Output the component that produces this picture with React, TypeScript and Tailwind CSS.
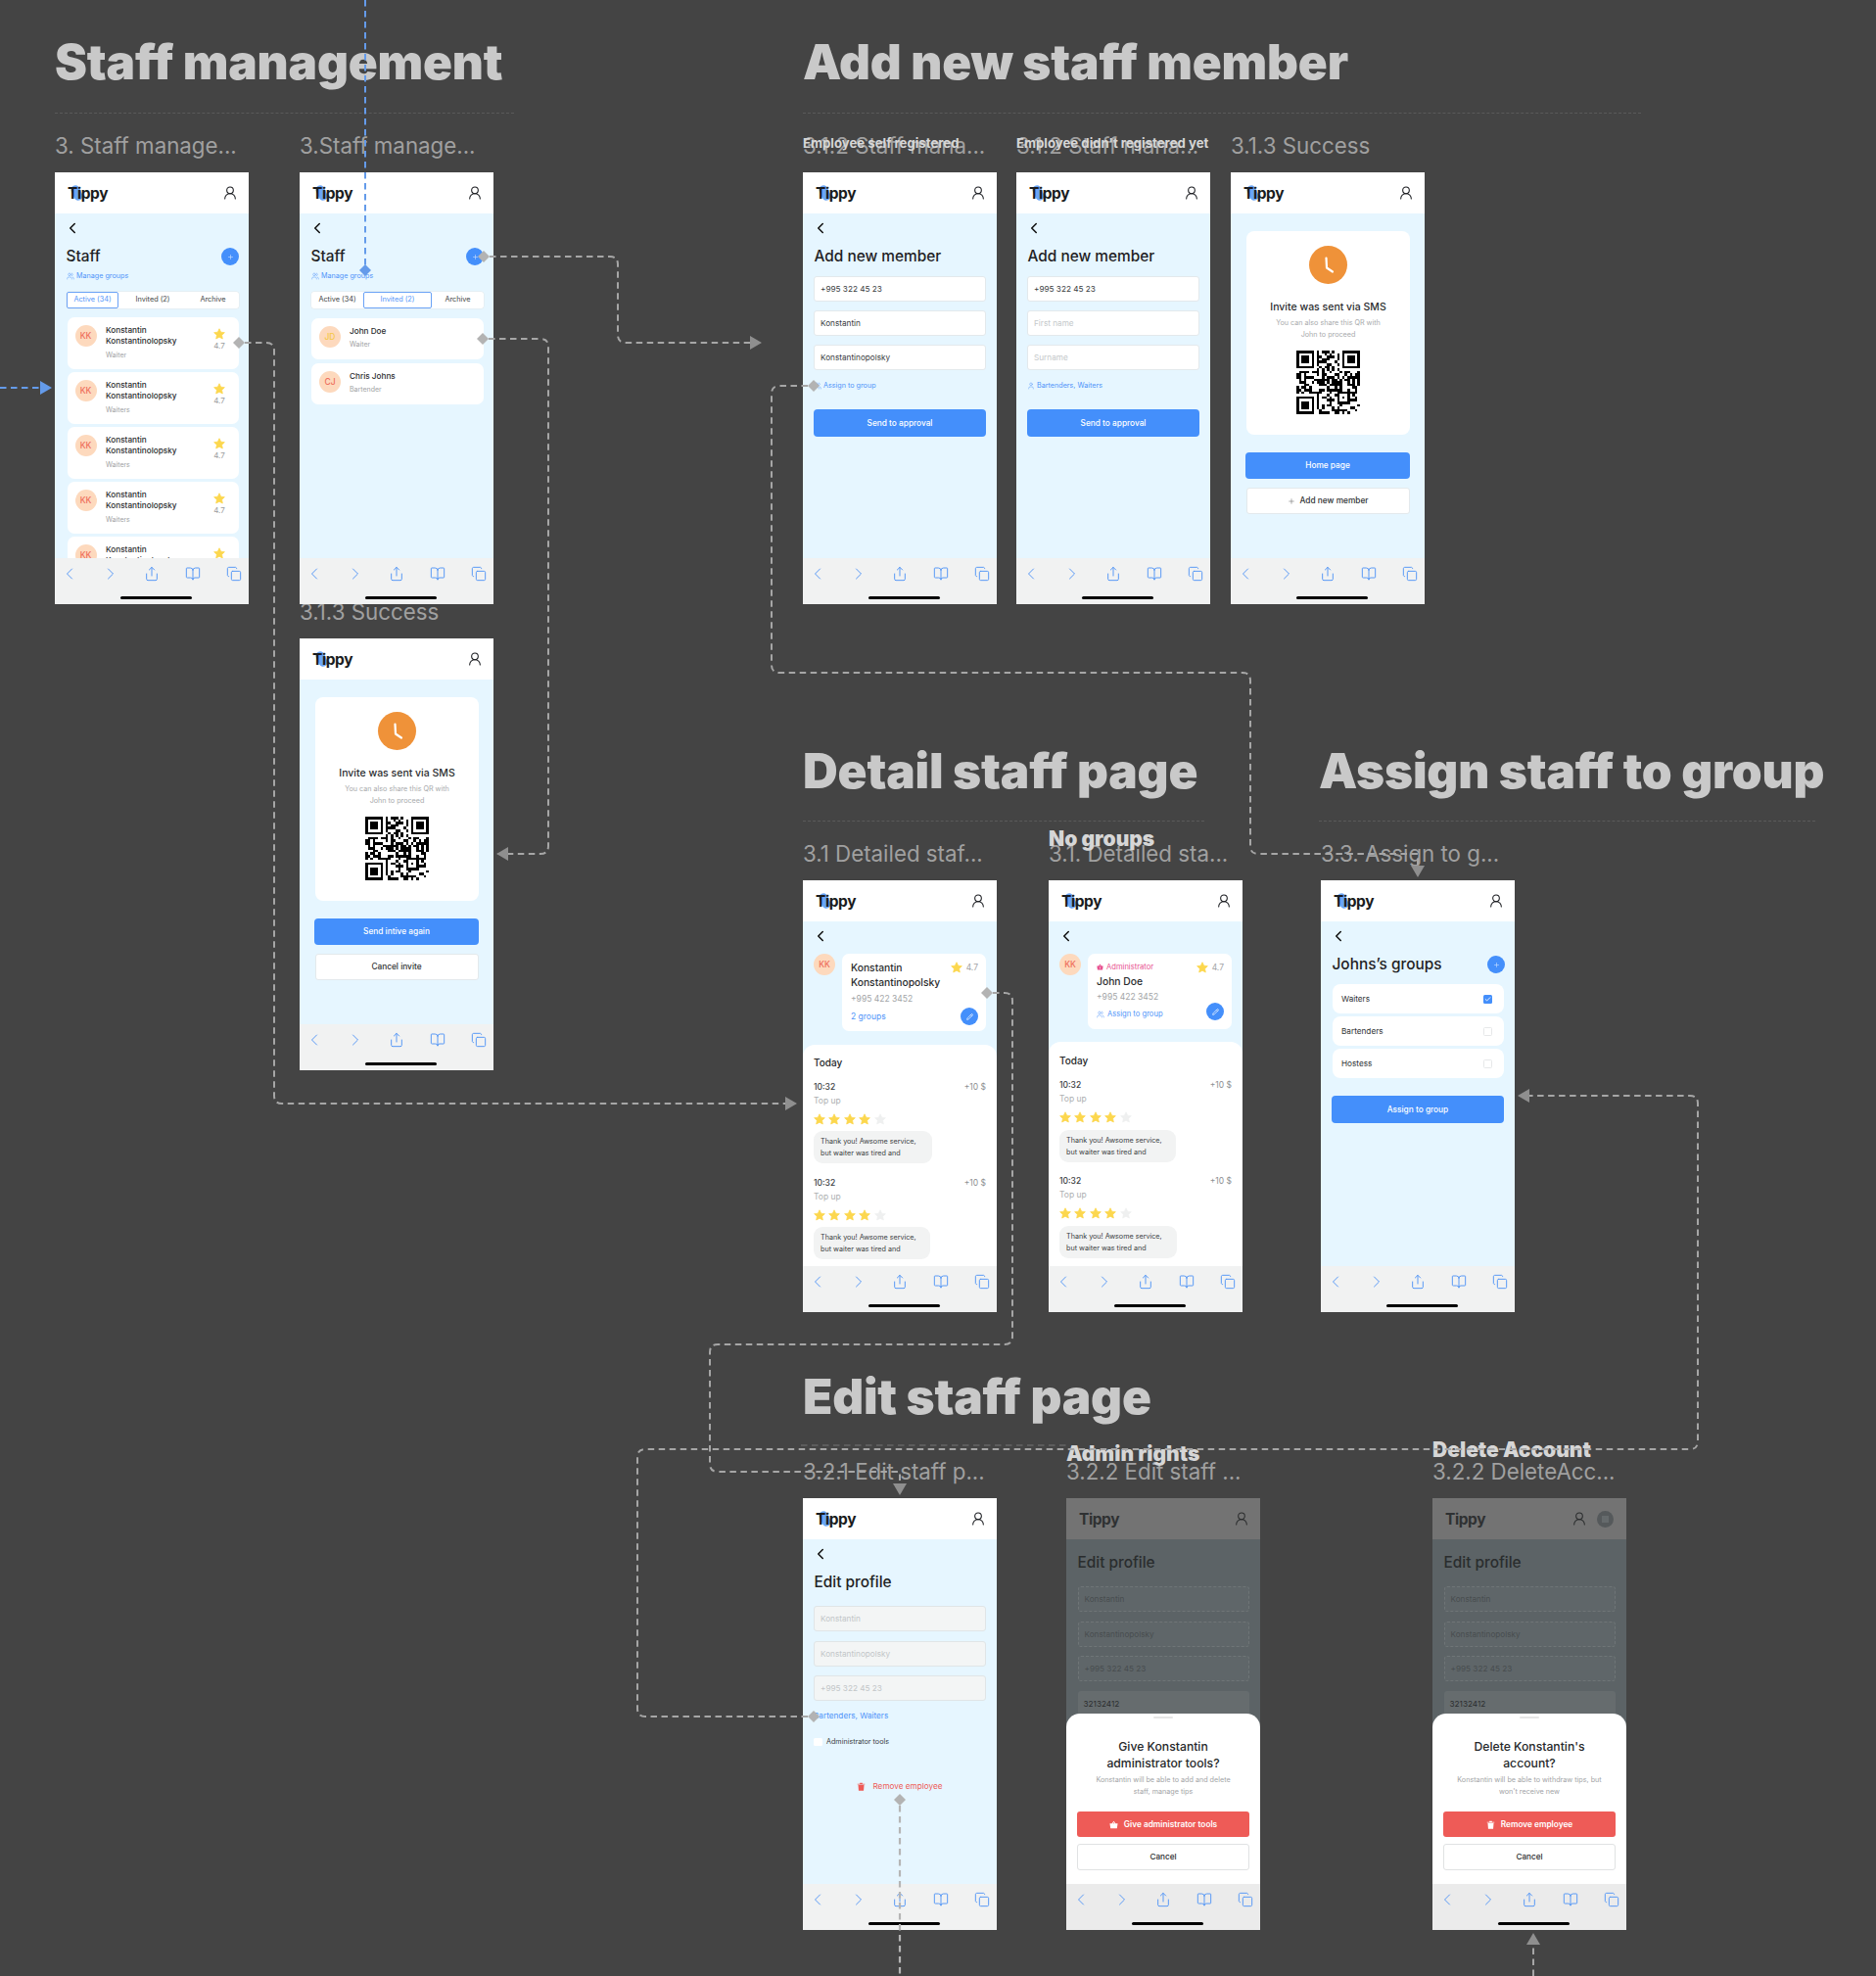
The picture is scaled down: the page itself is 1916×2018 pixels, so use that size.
import React from "react";
import { ChevronLeft, ChevronRight, UserRound, Users, User, Plus, Check, Pencil, Share, BookOpen, Copy } from "lucide-react";

function qrMatrix(seed: number) {
  const n = 25;
  let s = seed;
  const m: boolean[][] = [];
  for (let y = 0; y < n; y++) {
    const row: boolean[] = [];
    for (let x = 0; x < n; x++) {
      s = (s * 1103515245 + 12345) & 0x7fffffff;
      row.push(((s >> 16) & 3) < 2);
    }
    m.push(row);
  }
  const finder = (ox: number, oy: number) => {
    for (let y = -1; y < 8; y++)
      for (let x = -1; x < 8; x++) {
        const px = ox + x;
        const py = oy + y;
        if (px < 0 || py < 0 || px >= n || py >= n) continue;
        const on = x >= 0 && x <= 6 && y >= 0 && y <= 6 && (x === 0 || x === 6 || y === 0 || y === 6 || (x >= 2 && x <= 4 && y >= 2 && y <= 4));
        m[py][px] = on;
      }
  };
  finder(0, 0);
  finder(18, 0);
  finder(0, 18);
  for (let y = 16; y < 21; y++)
    for (let x = 16; x < 21; x++) m[y][x] = x === 16 || x === 20 || y === 16 || y === 20 || (x === 18 && y === 18);
  return m;
}
const QR_CELLS = qrMatrix(7321);

function QR() {
  return (
    <svg width="65" height="65" viewBox="0 0 25 25" shapeRendering="crispEdges" className="mx-auto block mt-[10px]">
      {QR_CELLS.map((row, y) => row.map((on, x) => (on ? <rect key={x + "-" + y} x={x} y={y} width="1" height="1" fill="#000" /> : null)))}
    </svg>
  );
}

function StarIcon({ size = 12, color = "#fcd74e" }: { size?: number; color?: string }) {
  return (
    <svg width={size} height={size} viewBox="0 0 24 24" className="shrink-0">
      <path d="M12 1.5l3.2 6.9 7.5.9-5.5 5.2 1.4 7.5L12 18.4 5.4 22l1.4-7.5L1.3 9.3l7.5-.9z" fill={color} stroke={color} strokeWidth="1.5" strokeLinejoin="round" />
    </svg>
  );
}

function TrashIcon({ color, size = 9 }: { color: string; size?: number }) {
  return (
    <svg width={size} height={size} viewBox="0 0 12 12" className="shrink-0">
      <path d="M1 2.2h10v1.2H1zM4.2 1h3.6v1.2H4.2zM2 4h8l-.6 7.6H2.6z" fill={color} />
    </svg>
  );
}

function CrownIcon({ color, size = 9 }: { color: string; size?: number }) {
  return (
    <svg width={size} height={size} viewBox="0 0 12 12" className="shrink-0">
      <path d="M6 1L8.6 4.4H11.4L10.4 11H1.6L0.6 4.4H3.4zM4.8 4.4H7.2L6 2.8z" fill={color} fillRule="evenodd" />
      <circle cx="6" cy="7.6" r="1.2" fill="#fff" opacity="0.7" />
    </svg>
  );
}

function Logo({ dim = false }: { dim?: boolean }) {
  return (
    <div className="relative ml-[13px] w-[42px] h-[20px] flex items-center">
      {!dim && <div className="absolute left-[5px] top-[2px] w-[9px] h-[16px] rounded-full rotate-[-25deg] bg-[#6aa5f5]" />}
      <span className={"relative text-[15.5px] leading-[20px] font-bold tracking-[-0.4px] translate-y-[1px] " + (dim ? "text-[#2f3132]" : "text-[#1a1c20]")}>Tippy</span>
    </div>
  );
}

function Header({ dim = false, extra = false }: { dim?: boolean; extra?: boolean }) {
  return (
    <div className={"h-[42px] shrink-0 flex items-center justify-between " + (dim ? "bg-[#737373]" : "bg-white")}>
      <Logo dim={dim} />
      <div className="flex items-center">
        <UserRound size={16} strokeWidth={1.6} color={dim ? "#2a2c2d" : "#1a1c20"} className={extra ? "mr-[10px]" : "mr-[11px]"} />
        {extra && (
          <div className="w-[17px] h-[17px] rounded-full bg-[#55595b] mr-[13px] flex items-center justify-center">
            <div className="w-[7px] h-[7px] bg-[#656a6c]" />
          </div>
        )}
      </div>
    </div>
  );
}

function Toolbar({ dim = false }: { dim?: boolean }) {
  const c = "#5a9af6";
  return (
    <div className={"h-[47px] shrink-0 relative z-10 " + (dim ? "bg-[#ebebeb]" : "bg-[#f1f2f2]")}>
      <div className="flex items-center justify-between px-[7px] pt-[8px] h-[24px]">
        <span className="w-[16px] flex justify-center">
          <ChevronLeft size={20} strokeWidth={1.2} color={c} className="shrink-0" />
        </span>
        <span className="w-[16px] flex justify-center">
          <ChevronRight size={20} strokeWidth={1.2} color={c} className="shrink-0" />
        </span>
        <Share size={16} strokeWidth={1.5} color={c} />
        <BookOpen size={16} strokeWidth={1.5} color={c} />
        <Copy size={16} strokeWidth={1.5} color={c} />
      </div>
      <div className="ml-[67px] mt-[15px] w-[73px] h-[3px] rounded-full bg-black" />
    </div>
  );
}

function Phone({ pos, children, dim = false, extra = false }: { pos: string; children: React.ReactNode; dim?: boolean; extra?: boolean }) {
  return (
    <div className={"absolute w-[198px] h-[441px] flex flex-col overflow-hidden " + pos + (dim ? " bg-[#5c6366]" : " bg-[#e6f6ff]")}>
      <Header dim={dim} extra={extra} />
      <div className="flex-1 min-h-0 overflow-hidden relative flex flex-col">{children}</div>
      <Toolbar dim={dim} />
    </div>
  );
}

function Back() {
  return (
    <div className="h-[12px] mt-[9px] ml-[9px] shrink-0 flex items-center">
      <ChevronLeft size={18} strokeWidth={2.1} color="#111" className="shrink-0" />
    </div>
  );
}

function TitleRow({ title, plus = false, mt = "mt-[13px]" }: { title: string; plus?: boolean; mt?: string }) {
  return (
    <div className={"flex items-center justify-between h-[20px] pl-[11.5px] pr-[10px] shrink-0 " + mt}>
      <span className="text-[15.4px] leading-[20px] font-medium text-[#1f2224] whitespace-nowrap">{title}</span>
      {plus && <PlusBtn />}
    </div>
  );
}

function PlusBtn() {
  return (
    <span className="w-[18px] h-[18px] rounded-full bg-[#448ffb] flex items-center justify-center">
      <Plus size={7} strokeWidth={2} color="#cfe2ff" />
    </span>
  );
}

function Tabs({ active }: { active: number }) {
  const items = [
    { t: "Active (34)", w: "w-[53px]" },
    { t: "Invited (2)", w: "w-[70px]" },
    { t: "Archive", w: "w-[53px]" },
  ];
  return (
    <div className="mt-[11px] ml-[12px] w-[176px] h-[17px] flex bg-white rounded-[3px] shrink-0 shadow-[0_0_0_0.5px_#e3e8ea]">
      {items.map((it, i) => (
        <div
          key={it.t}
          className={
            "h-full flex items-center justify-center text-[7.3px] " +
            it.w +
            (i === active ? " border border-[#6ba3f6] rounded-[2px] text-[#4f94f9]" : " text-[#3c3f41]")
          }
        >
          {it.t}
        </div>
      ))}
    </div>
  );
}

function Manage() {
  return (
    <div className="mt-[5px] ml-[12px] h-[10px] flex items-center gap-[2px] text-[7.2px] leading-[10px] text-[#4f94f9] shrink-0">
      <Users size={8} strokeWidth={1.4} />
      <span>Manage groups</span>
    </div>
  );
}

function StaffCard({ role }: { role: string }) {
  return (
    <div className="h-[53px] shrink-0 ml-[12.5px] w-[175.5px] bg-white rounded-[7px] flex pt-[8px] pl-[8px] pr-[8px]">
      <div className="w-[22px] h-[22px] rounded-full bg-[#fdd9bd] flex items-center justify-center text-[8.5px] font-medium text-[#ee6e5b] shrink-0">KK</div>
      <div className="ml-[9.5px] flex-1 min-w-0">
        <div className="text-[8.2px] leading-[11px] font-medium text-[#2a2c2e]">Konstantin</div>
        <div className="text-[8.2px] leading-[11px] font-medium text-[#2a2c2e] whitespace-nowrap">Konstantinolopsky</div>
        <div className="mt-[4px] text-[7px] leading-[10px] text-[#a0a2a3]">{role}</div>
      </div>
      <div className="w-[24px] flex flex-col items-center pt-[3px] shrink-0">
        <StarIcon size={12} />
        <div className="mt-[1px] text-[8px] leading-[10px] text-[#9a9c9e]">4.7</div>
      </div>
    </div>
  );
}

function InviteCard({ initials, color, name, role, mt }: { initials: string; color: string; name: string; role: string; mt: string }) {
  return (
    <div className={"h-[42px] shrink-0 ml-[11.5px] w-[176px] bg-white rounded-[7px] flex items-start pt-[8px] pl-[8.5px] " + mt}>
      <div className={"w-[22px] h-[22px] rounded-full bg-[#fdd9bd] flex items-center justify-center text-[8.5px] font-medium shrink-0 " + color}>{initials}</div>
      <div className="ml-[9px]">
        <div className="text-[8.2px] leading-[11px] font-medium text-[#2a2c2e]">{name}</div>
        <div className="mt-[3px] text-[7px] leading-[10px] text-[#a0a2a3]">{role}</div>
      </div>
    </div>
  );
}

function Input({ text, mt, muted = false }: { text: string; mt: string; muted?: boolean }) {
  return (
    <div className={"ml-[11px] w-[176px] h-[26px] shrink-0 bg-white rounded-[3px] border border-[#e3e9ec] flex items-center pl-[6px] text-[8.2px] " + mt + (muted ? " text-[#c4c8ca]" : " text-[#3a3d3f]")}>
      {text}
    </div>
  );
}

function EditInput({ text, mt }: { text: string; mt: string }) {
  return (
    <div className={"ml-[11px] w-[176px] h-[26px] shrink-0 bg-[#f3f5f5] rounded-[3px] border border-[#e0e5e7] flex items-center pl-[6px] text-[8.2px] text-[#c2c6c8] " + mt}>
      {text}
    </div>
  );
}

function DimInput({ text, mt }: { text: string; mt: string }) {
  return (
    <div className={"ml-[11.5px] w-[175px] h-[26px] shrink-0 rounded-[3px] border border-dashed border-[#6f7577] bg-[#5f6669] flex items-center pl-[6px] text-[8.2px] text-[#484d4f] " + mt}>
      {text}
    </div>
  );
}

function PrimaryBtn({ text, cls }: { text: string; cls: string }) {
  return <div className={"shrink-0 rounded-[4px] bg-[#448ffb] flex items-center justify-center text-[8.3px] font-medium text-white " + cls}>{text}</div>;
}

function SuccessCard() {
  return (
    <div className="mt-[18px] ml-[16px] w-[167px] h-[208px] shrink-0 bg-white rounded-[8px] flex flex-col items-center pt-[14.5px]">
      <div className="w-[39px] h-[39px] rounded-full bg-[#ef9239] flex items-center justify-center">
        <svg width="16" height="20" viewBox="0 0 16 20" fill="none">
          <path d="M5.5 3.5L6 13.5L12 17.5" stroke="#fff" strokeWidth="2.2" strokeLinecap="round" strokeLinejoin="round" />
        </svg>
      </div>
      <div className="mt-[17.5px] text-[10.5px] leading-[14px] font-medium text-[#2a2c2e] whitespace-nowrap">Invite was sent via SMS</div>
      <div className="mt-[3px] text-[7.2px] leading-[12px] text-[#a8aaac] text-center">
        You can also share this QR with
        <br />
        John to proceed
      </div>
      <QR />
    </div>
  );
}

function RatingStars() {
  return (
    <div className="flex gap-[3.4px] mt-[7px] h-[12px]">
      <StarIcon />
      <StarIcon />
      <StarIcon />
      <StarIcon />
      <StarIcon color="#eff0f0" />
    </div>
  );
}

function Entry({ mt, bubble, bubbleMt = "mt-[6px]" }: { mt: string; bubble: string; bubbleMt?: string }) {
  return (
    <div className={mt}>
      <div className="flex justify-between text-[8.5px] leading-[12px]">
        <span className="font-medium text-[#3a3d3f]">10:32</span>
        <span className="text-[#8e9092]">+10 $</span>
      </div>
      <div className="mt-[2px] text-[8.5px] leading-[12px] text-[#adafb1]">Top up</div>
      <RatingStars />
      <div className={"h-[33px] rounded-[9px] bg-[#f2f3f3] pt-[5px] pl-[7px] text-[7.2px] leading-[12px] text-[#3a3d3f] whitespace-nowrap " + bubble + " " + bubbleMt}>
        Thank you! Awsome service,
        <br />
        but waiter was tired and
      </div>
    </div>
  );
}

function EditCircle() {
  return (
    <span className="w-[18px] h-[18px] rounded-full bg-[#448ffb] flex items-center justify-center shrink-0">
      <Pencil size={7} strokeWidth={2.4} color="#fff" />
    </span>
  );
}

function Rating47() {
  return (
    <div className="flex items-center gap-[4px] h-[15px] shrink-0">
      <StarIcon size={12} />
      <span className="text-[8.5px] text-[#a2a4a6]">4.7</span>
    </div>
  );
}

function Row({ text, checked, mt }: { text: string; checked?: boolean; mt: string }) {
  return (
    <div className={"ml-[12px] w-[175px] h-[30px] shrink-0 bg-white rounded-[8px] flex items-center justify-between pl-[9px] pr-[12.5px] text-[8.2px] text-[#2f3234] " + mt}>
      <span>{text}</span>
      {checked ? (
        <span className="w-[9px] h-[9px] rounded-[1.5px] bg-[#448ffb] flex items-center justify-center">
          <Check size={7} strokeWidth={3} color="#fff" />
        </span>
      ) : (
        <span className="w-[9px] h-[9px] rounded-[1.5px] border border-[#e6e8e9] bg-white" />
      )}
    </div>
  );
}

function Sheet({ title1, title2, sub1, sub2, btn, icon }: { title1: string; title2: string; sub1: string; sub2: string; btn: string; icon: React.ReactNode }) {
  return (
    <div className="absolute left-0 right-0 top-[178px] bottom-0 bg-white rounded-t-[14px] flex flex-col items-center">
      <div className="mt-[2.5px] w-[20px] h-[2px] rounded-full bg-[#e6e6e6]" />
      <div className="mt-[20px] text-[12.2px] leading-[17px] font-medium text-[#26282a] text-center whitespace-nowrap">
        {title1}
        <br />
        {title2}
      </div>
      <div className="mt-[3px] text-[7.2px] leading-[12.5px] text-[#a2a4a6] text-center whitespace-nowrap">
        {sub1}
        <br />
        {sub2}
      </div>
      <div className="mt-[13.5px] w-[176px] h-[26px] rounded-[3px] bg-[#ee5b57] flex items-center justify-center gap-[6px] text-[8.3px] font-semibold text-white">
        {icon}
        <span>{btn}</span>
      </div>
      <div className="mt-[7px] w-[176px] h-[27px] rounded-[3px] border border-[#e0e2e3] bg-white flex items-center justify-center text-[8.2px] font-medium text-[#2a2c2e]">Cancel</div>
    </div>
  );
}

function DimEditBody() {
  return (
    <>
      <div className="mt-[14px] h-[20px] pl-[11.5px] text-[15.4px] leading-[20px] font-medium text-[#2a2d2e] shrink-0">Edit profile</div>
      <DimInput text="Konstantin" mt="mt-[14px]" />
      <DimInput text="Konstantinopolsky" mt="mt-[10px]" />
      <DimInput text="+995 322 45 23" mt="mt-[9px]" />
      <div className="mt-[10px] ml-[11.5px] w-[175px] h-[26px] shrink-0 rounded-[3px] bg-[#666c6e] flex items-center pl-[6px] text-[8.2px] text-[#2c2e2f]">32132412</div>
    </>
  );
}

function H({ pos, children }: { pos: string; children: React.ReactNode }) {
  return <h1 className={"absolute text-[49.5px] leading-[46px] font-black tracking-[-0.2px] text-[#c9c9c9] whitespace-nowrap " + pos}>{children}</h1>;
}
function L({ pos, children }: { pos: string; children: React.ReactNode }) {
  return <div className={"absolute text-[22.3px] leading-[28px] text-[#a0a0a0] whitespace-nowrap " + pos}>{children}</div>;
}
function B({ pos, children, cls }: { pos: string; children: React.ReactNode; cls: string }) {
  return <div className={"absolute text-[#d6d6d6] whitespace-nowrap " + cls + " " + pos}>{children}</div>;
}
function Rule({ pos }: { pos: string }) {
  return <div className={"absolute border-t border-dashed border-[#5a5a5a] " + pos} />;
}

function Diamond({ x, y, fill = "#b3b3b3", r = 6 }: { x: number; y: number; fill?: string; r?: number }) {
  return <polygon points={`${x},${y - r} ${x + r},${y} ${x},${y + r} ${x - r},${y}`} fill={fill} />;
}

function Connectors() {
  const g = { stroke: "#a6a6a6", strokeWidth: 2, strokeDasharray: "6.5 4.5", fill: "none" };
  const a = "#8f8f8f";
  const b = "#649bea";
  return (
    <svg width="1916" height="2018" viewBox="0 0 1916 2018" className="absolute left-0 top-0 z-20 pointer-events-none">
      <path d="M0 396H44" stroke={b} strokeWidth="2" strokeDasharray="6.5 4.5" fill="none" />
      <polygon points="41,389 53,396 41,403" fill={b} />
      <path d="M373 0V276" stroke={b} strokeWidth="2" strokeDasharray="6.5 4.5" fill="none" />
      <Diamond x={373} y={276} fill={b} />

      <path d="M250 350H272Q280 350 280 358V1119Q280 1127 288 1127H804" {...g} />
      <polygon points="814,1127 802,1120 802,1134" fill={a} />
      <Diamond x={244} y={350} />

      <path d="M500 262H623Q631 262 631 270V342Q631 350 639 350H768" {...g} />
      <polygon points="778,350 766,343 766,357" fill={a} />
      <Diamond x={494} y={262} />

      <path d="M499 346H552Q560 346 560 354V864Q560 872 552 872H516" {...g} />
      <polygon points="507,872 519,865 519,879" fill={a} />
      <Diamond x={493} y={346} />

      <path d="M825 394H796Q788 394 788 402V679Q788 687 796 687H1269Q1277 687 1277 695V864Q1277 872 1285 872H1448V888" {...g} />
      <polygon points="1448,896 1441,884 1455,884" fill={a} />
      <Diamond x={831} y={394} />

      <path d="M1014 1014H1026Q1034 1014 1034 1022V1365Q1034 1373 1026 1373H733Q725 1373 725 1381V1495Q725 1503 733 1503H919V1519" {...g} />
      <polygon points="919,1527 912,1515 926,1515" fill={a} />
      <Diamond x={1008} y={1014} />

      <path d="M825 1753H659Q651 1753 651 1745V1488Q651 1480 659 1480H1726Q1734 1480 1734 1472V1127Q1734 1119 1726 1119H1560" {...g} />
      <polygon points="1550,1119 1562,1112 1562,1126" fill={a} />
      <Diamond x={831} y={1753} />
      <path d="M818 1476H1090" stroke="#5c5c5c" strokeWidth="2" strokeDasharray="6.5 4.5" fill="none" />

      <path d="M919 1844V2018" stroke="#b5b5b5" strokeWidth="2.2" strokeDasharray="6.5 4.5" fill="none" />
      <Diamond x={919} y={1838} />

      <path d="M1566 2018V1984" {...g} />
      <polygon points="1566,1974 1559,1986 1573,1986" fill={a} />
    </svg>
  );
}

export default function App() {
  const staff = ["Waiter", "Waiters", "Waiters", "Waiters", "Waiters"];
  return (
    <div className="relative w-[1916px] h-[2018px] overflow-hidden bg-[#444444] [font-family:Inter,sans-serif]">
      <H pos="left-[56px] top-[40px]">Staff management</H>
      <H pos="left-[820px] top-[40px]">Add new staff member</H>
      <H pos="left-[820px] top-[764px]">Detail staff page</H>
      <H pos="left-[1347px] top-[764px]">Assign staff to group</H>
      <H pos="left-[820px] top-[1403px]">Edit staff page</H>

      <Rule pos="left-[56px] top-[115px] w-[469px]" />
      <Rule pos="left-[820px] top-[115px] w-[856px]" />
      <Rule pos="left-[820px] top-[838px] w-[410px]" />
      <Rule pos="left-[1347px] top-[838px] w-[507px]" />

      <L pos="left-[56px] top-[135px]">3. Staff manage...</L>
      <L pos="left-[306px] top-[135px]">3.Staff manage...</L>
      <L pos="left-[820px] top-[135px]">3.1.2 Staff mana...</L>
      <L pos="left-[1038px] top-[135px]">3.1.2 Staff mana...</L>
      <L pos="left-[1257px] top-[135px]">3.1.3 Success</L>
      <L pos="left-[306px] top-[611px]">3.1.3 Success</L>
      <L pos="left-[820px] top-[858px]">3.1 Detailed staf...</L>
      <L pos="left-[1071px] top-[858px]">3.1. Detailed sta...</L>
      <L pos="left-[1349px] top-[858px]">3.3. Assign to g...</L>
      <L pos="left-[820px] top-[1489px]">3.2.1 Edit staff p...</L>
      <L pos="left-[1089px] top-[1489px]">3.2.2 Edit staff ...</L>
      <L pos="left-[1463px] top-[1489px]">3.2.2 DeleteAcc...</L>

      <B pos="left-[820px] top-[137px]" cls="text-[13.2px] leading-[18px] font-bold">Employee self registered</B>
      <B pos="left-[1038px] top-[137px]" cls="text-[13.2px] leading-[18px] font-bold">Employee didn't registered yet</B>
      <B pos="left-[1071px] top-[844px]" cls="text-[21px] leading-[26px] font-black">No groups</B>
      <B pos="left-[1089px] top-[1472px]" cls="text-[21px] leading-[26px] font-black">Admin rights</B>
      <B pos="left-[1463px] top-[1468px]" cls="text-[21px] leading-[26px] font-black">Delete Account</B>

      {/* 3. Staff management */}
      <Phone pos="left-[56px] top-[176px]">
        <Back />
        <TitleRow title="Staff" plus />
        <Manage />
        <Tabs active={0} />
        <div className="mt-[9px] flex flex-col gap-[3px]">
          {staff.map((r, i) => (
            <StaffCard key={i} role={r} />
          ))}
        </div>
      </Phone>

      <Phone pos="left-[306px] top-[176px]">
        <Back />
        <TitleRow title="Staff" plus />
        <Manage />
        <Tabs active={1} />
        <InviteCard initials="JD" color="text-[#f5c84a]" name="John Doe" role="Waiter" mt="mt-[10px]" />
        <InviteCard initials="CJ" color="text-[#ee6e5b]" name="Chris Johns" role="Bartender" mt="mt-[4px]" />
      </Phone>

      <Phone pos="left-[306px] top-[652px]">
        <SuccessCard />
        <PrimaryBtn text="Send intive again" cls="mt-[18px] ml-[15px] w-[168px] h-[27px]" />
        <div className="mt-[9px] ml-[15.5px] w-[167px] h-[27px] shrink-0 bg-white rounded-[3px] border border-[#e3e9ec] flex items-center justify-center text-[8.3px] font-medium text-[#2f3234]">Cancel invite</div>
      </Phone>

      {/* Add new member */}
      <Phone pos="left-[820px] top-[176px]">
        <Back />
        <TitleRow title="Add new member" />
        <Input text="+995 322 45 23" mt="mt-[10px]" />
        <Input text="Konstantin" mt="mt-[9px]" />
        <Input text="Konstantinopolsky" mt="mt-[9px]" />
        <div className="mt-[11px] ml-[11px] h-[10px] flex items-center gap-[2px] text-[7.2px] leading-[10px] text-[#4f94f9]">
          <Users size={8} strokeWidth={1.4} />
          <span>Assign to group</span>
        </div>
        <PrimaryBtn text="Send to approval" cls="mt-[19px] ml-[11px] w-[176px] h-[28px]" />
      </Phone>

      <Phone pos="left-[1038px] top-[176px]">
        <Back />
        <TitleRow title="Add new member" />
        <Input text="+995 322 45 23" mt="mt-[10px]" />
        <Input text="First name" mt="mt-[9px]" muted />
        <Input text="Surname" mt="mt-[9px]" muted />
        <div className="mt-[11px] ml-[11px] h-[10px] flex items-center gap-[2px] text-[7.2px] leading-[10px] text-[#4f94f9]">
          <User size={8} strokeWidth={1.4} />
          <span>Bartenders, Waiters</span>
        </div>
        <PrimaryBtn text="Send to approval" cls="mt-[19px] ml-[11px] w-[176px] h-[28px]" />
      </Phone>

      <Phone pos="left-[1257px] top-[176px]">
        <SuccessCard />
        <PrimaryBtn text="Home page" cls="mt-[18px] ml-[15px] w-[168px] h-[27px]" />
        <div className="mt-[9px] ml-[15.5px] w-[167px] h-[27px] shrink-0 bg-white rounded-[3px] border border-[#e3e9ec] flex items-center justify-center gap-[5px] text-[8.3px] font-medium text-[#2f3234]">
          <Plus size={8} strokeWidth={1.4} color="#555" />
          <span>Add new member</span>
        </div>
      </Phone>

      {/* Detail */}
      <Phone pos="left-[820px] top-[899px]">
        <Back />
        <div className="mt-[12px] ml-[11px] flex items-start shrink-0">
          <div className="w-[22px] h-[22px] rounded-full bg-[#fdd9bd] flex items-center justify-center text-[8.5px] font-medium text-[#ee6e5b]">KK</div>
          <div className="ml-[7px] w-[147px] h-[79px] bg-white rounded-[7px] pl-[9px] pr-[8px] pt-[6.5px]">
            <div className="flex justify-between">
              <div className="text-[10.3px] leading-[15px] font-medium text-[#2a2c2e] whitespace-nowrap">
                Konstantin
                <br />
                Konstantinopolsky
              </div>
              <Rating47 />
            </div>
            <div className="mt-[3.5px] text-[8.5px] leading-[12px] text-[#a2a4a6]">+995 422 3452</div>
            <div className="mt-[3px] h-[18px] flex items-center justify-between">
              <span className="text-[8.5px] leading-[12px] text-[#4f94f9]">2 groups</span>
              <EditCircle />
            </div>
          </div>
        </div>
        <div className="mt-[14px] flex-1 bg-white rounded-t-[12px] px-[11px] pt-[11px] overflow-hidden">
          <div className="text-[10px] leading-[14px] font-medium text-[#26282a]">Today</div>
          <Entry mt="mt-[12px]" bubble="w-[121px]" />
          <Entry mt="mt-[14px]" bubble="w-[119px]" />
        </div>
      </Phone>

      <Phone pos="left-[1071px] top-[899px]">
        <Back />
        <div className="mt-[12px] ml-[11px] flex items-start shrink-0">
          <div className="w-[22px] h-[22px] rounded-full bg-[#fdd9bd] flex items-center justify-center text-[8.5px] font-medium text-[#ee6e5b]">KK</div>
          <div className="ml-[7px] w-[147px] h-[77px] bg-white rounded-[7px] pl-[9px] pr-[8px] pt-[8px]">
            <div className="flex justify-between h-[12px] items-center">
              <div className="flex items-center gap-[3px] text-[7.6px] text-[#e8508f]">
                <CrownIcon color="#e8508f" size={7} />
                <span>Administrator</span>
              </div>
              <Rating47 />
            </div>
            <div className="mt-[0.5px] text-[10.3px] leading-[15px] font-medium text-[#2a2c2e]">John Doe</div>
            <div className="mt-[2.5px] text-[8.5px] leading-[12px] text-[#a2a4a6]">+995 422 3452</div>
            <div className="h-[18px] flex items-end justify-between">
              <span className="flex items-center gap-[3px] text-[7.6px] leading-[12px] text-[#4f94f9]">
                <Users size={8} strokeWidth={1.4} />
                Assign to group
              </span>
              <EditCircle />
            </div>
          </div>
        </div>
        <div className="mt-[13px] flex-1 bg-white rounded-t-[12px] px-[11px] pt-[12px] overflow-hidden">
          <div className="text-[10px] leading-[14px] font-medium text-[#26282a]">Today</div>
          <Entry mt="mt-[12px]" bubble="w-[119px]" bubbleMt="mt-[7px]" />
          <Entry mt="mt-[13px]" bubble="w-[120px]" bubbleMt="mt-[7px]" />
        </div>
      </Phone>

      <Phone pos="left-[1349px] top-[899px]">
        <Back />
        <TitleRow title="Johns’s groups" plus />
        <Row text="Waiters" checked mt="mt-[10px]" />
        <Row text="Bartenders" mt="mt-[3px]" />
        <Row text="Hostess" mt="mt-[3px]" />
        <PrimaryBtn text="Assign to group" cls="mt-[18px] ml-[11px] w-[176px] h-[28px]" />
      </Phone>

      {/* Edit */}
      <Phone pos="left-[820px] top-[1530px]">
        <Back />
        <TitleRow title="Edit profile" />
        <EditInput text="Konstantin" mt="mt-[14px]" />
        <EditInput text="Konstantinopolsky" mt="mt-[10px]" />
        <EditInput text="+995 322 45 23" mt="mt-[9px]" />
        <div className="mt-[10px] ml-[11px] h-[10px] text-[8.2px] leading-[10px] text-[#4f94f9]">Bartenders, Waiters</div>
        <div className="mt-[17.5px] ml-[11px] h-[9px] flex items-center gap-[4.5px] text-[7.2px] text-[#3a3d3f]">
          <span className="w-[8.5px] h-[8.5px] rounded-[1.5px] bg-white" />
          <span>Administrator tools</span>
        </div>
        <div className="mt-[34.5px] h-[12px] flex items-center justify-center gap-[7px] text-[8.2px] text-[#ee5b57]">
          <TrashIcon color="#ee5b57" />
          <span>Remove employee</span>
        </div>
      </Phone>

      <Phone pos="left-[1089px] top-[1530px]" dim>
        <DimEditBody />
        <Sheet
          title1="Give Konstantin"
          title2="administrator tools?"
          sub1="Konstantin will be able to add and delete"
          sub2="staff, manage tips"
          btn="Give administrator tools"
          icon={<CrownIcon color="#fff" />}
        />
      </Phone>

      <Phone pos="left-[1463px] top-[1530px]" dim extra>
        <DimEditBody />
        <Sheet
          title1="Delete Konstantin's"
          title2="account?"
          sub1="Konstantin will be able to withdraw tips, but"
          sub2="won't receive new"
          btn="Remove employee"
          icon={<TrashIcon color="#fff" />}
        />
      </Phone>

      <Connectors />
    </div>
  );
}
